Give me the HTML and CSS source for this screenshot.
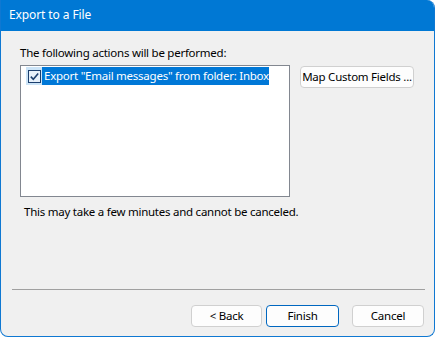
FILE: index.html
```html
<!DOCTYPE html>
<html>
<head>
<meta charset="utf-8">
<link rel="stylesheet" href="styles.css">
</head>
<body>
<div class="window">
  <div class="titlebar">Export to a File</div>
  <div class="content">
    <div class="label">The following actions will be performed:</div>
    <div class="listrow">
      <div class="listbox">
        <div class="item">
          <span class="checkcell">
            <svg class="check" width="13" height="13" viewBox="0 0 13 13">
              <rect x="0.5" y="0.5" width="12" height="12" fill="#e6f0fa" stroke="#1c3f6e"/>
              <path d="M2.8 6.6 L5.3 9.2 L10.2 3.4" fill="none" stroke="#1c3f6e" stroke-width="1.6"/>
            </svg>
          </span>
          <span class="itemtext">Export "Email messages" from folder: Inbox</span>
        </div>
      </div>
      <button class="btn map">Map Custom Fields ...</button>
    </div>
    <div class="note">This may take a few minutes and cannot be canceled.</div>
    <div class="spacer"></div>
    <div class="separator"></div>
    <div class="buttons">
      <button class="btn">&lt; Back</button>
      <button class="btn default">Finish</button>
      <button class="btn cancel">Cancel</button>
    </div>
  </div>
</div>
</body>
</html>
```

FILE: styles.css
```css
html, body {
  margin: 0;
  padding: 0;
  background: #ffffff;
}
body {
  font-family: "Noto Sans", "Open Sans", sans-serif;
  font-size: 11.5px;
  letter-spacing: -0.25px;
  color: #000;
}
.window {
  width: 435px;
  height: 337px;
  box-sizing: border-box;
  border: 1px solid #0f78d2;
  border-top: none;
  border-radius: 0 8px 8px 8px;
  background: #f0f0f0;
  overflow: hidden;
  display: flex;
  flex-direction: column;
}
.titlebar {
  height: 31px;
  line-height: 30px;
  background: #0078d4;
  color: #fff;
  padding-left: 8px;
  font-size: 12px;
  letter-spacing: -0.1px;
  flex: none;
}
.content {
  flex: 1;
  display: flex;
  flex-direction: column;
  padding: 14px 9px 9px 19px;
}
.label {
  line-height: 16px;
  height: 16px;
  white-space: nowrap;
}
.listrow {
  display: flex;
  align-items: flex-start;
  gap: 10px;
  margin-top: 4px;
}
.listbox {
  width: 270px;
  height: 132px;
  flex: none;
  box-sizing: border-box;
  border: 1px solid #828790;
  background: #fff;
  padding: 1px 0 0 5px;
}
.item {
  display: flex;
  height: 18px;
  align-items: stretch;
  white-space: nowrap;
}
.checkcell {
  width: 16px;
  flex: none;
  background: #cce4f7;
  display: flex;
  align-items: center;
  justify-content: center;
}
.check {
  display: block;
}
.itemtext {
  background: #0078d7;
  color: #fff;
  line-height: 18px;
  padding: 0 0 0 2px;
}
.btn {
  font-family: "Noto Sans", "Open Sans", sans-serif;
  font-size: 11.5px;
  letter-spacing: -0.25px;
  color: #000;
  height: 22px;
  box-sizing: border-box;
  border: 1px solid #d0d0d0;
  border-radius: 4px;
  background: #fdfdfd;
  padding: 0;
  line-height: 18px;
  white-space: nowrap;
}
.map {
  margin-top: 1px;
  width: 114px;
  flex: none;
}
.note {
  margin-top: 7px;
  padding-left: 4px;
  line-height: 16px;
  white-space: nowrap;
}
.spacer {
  flex: 1;
}
.separator {
  height: 1px;
  background: #a0a0a0;
  margin-left: -8px;
  margin-right: 0;
}
.buttons {
  display: flex;
  justify-content: flex-end;
  margin-top: 15px;
  gap: 4px;
  margin-right: 1px;
}
.buttons .btn {
  width: 71px;
}
.buttons .default {
  border: 1px solid #0067c0;
  width: 73px;
}
.buttons .cancel {
  margin-left: 9px;
  width: 72px;
}
```
